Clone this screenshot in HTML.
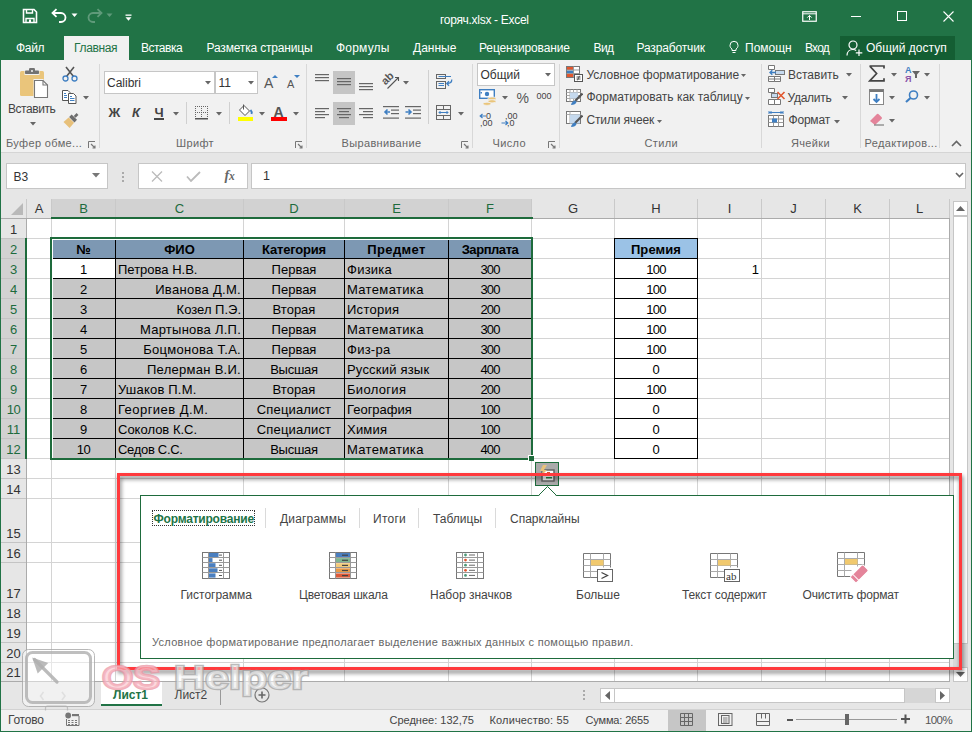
<!DOCTYPE html>
<html><head><meta charset="utf-8"><style>
html,body{margin:0;padding:0;width:972px;height:732px;overflow:hidden;background:#fff}
body{position:relative;font-family:"Liberation Sans", sans-serif}
div,span,svg{position:absolute}
.t{white-space:nowrap;font-family:"Liberation Sans", sans-serif}
.wm{font-family:"Liberation Sans", sans-serif;white-space:nowrap}
</style></head><body>
<div style="left:0px;top:0px;width:972px;height:60px;background:#217346"></div>
<svg style="left:22px;top:8px;" width="16" height="16" viewBox="0 0 16 16"><path d="M1.5 1.5h10.5l2.5 2.5v10.5h-13z" fill="none" stroke="#fff" stroke-width="1.6"/><path d="M4.5 1.5v3.5h6v-3.5" fill="none" stroke="#fff" stroke-width="1.4"/><path d="M4 14.5v-4h8v4" fill="none" stroke="#fff" stroke-width="1.4"/><rect x="7" y="11.5" width="2" height="3" fill="#fff"/></svg>
<svg style="left:50px;top:8px;" width="18" height="16" viewBox="0 0 18 16"><path d="M3 5h8a4.5 4.5 0 0 1 0 9h-2" fill="none" stroke="#fff" stroke-width="1.8"/><path d="M6.5 1.2L2.5 5l4 3.8" fill="none" stroke="#fff" stroke-width="1.8"/></svg>
<svg style="left:71px;top:13px;" width="7" height="5" viewBox="0 0 7 5"><path d="M0.5 0.5h6l-3 3.5z" fill="#fff"/></svg>
<svg style="left:86px;top:8px;opacity:.28" width="18" height="16" viewBox="0 0 18 16"><path d="M15 5h-8a4.5 4.5 0 0 0 0 9h2" fill="none" stroke="#fff" stroke-width="1.8"/><path d="M11.5 1.2l4 3.8-4 3.8" fill="none" stroke="#fff" stroke-width="1.8"/></svg>
<svg style="left:106px;top:13px;opacity:.28" width="7" height="5" viewBox="0 0 7 5"><path d="M0.5 0.5h6l-3 3.5z" fill="#fff"/></svg>
<svg style="left:125px;top:14px;" width="7" height="8" viewBox="0 0 7 8"><rect x="0.5" y="0.5" width="6" height="1.3" fill="#fff"/><path d="M0.5 3.2h6l-3 3.6z" fill="#fff"/></svg>
<span class="t" style="left:440px;top:13.84px;font-size:12px;line-height:12px;color:#fff;font-weight:400;letter-spacing:-0.3px;">горяч.xlsx - Excel</span>
<svg style="left:802px;top:11px;" width="15" height="11" viewBox="0 0 15 11"><rect x="0.75" y="0.75" width="13.5" height="9.5" fill="none" stroke="#fff" stroke-width="1.2"/><path d="M0.75 2.8h13.5" stroke="#fff" stroke-width="1"/><path d="M7.5 9V4.5M5.3 6.6l2.2-2.2 2.2 2.2" fill="none" stroke="#fff" stroke-width="1"/></svg>
<div style="left:851px;top:16px;width:10px;height:1px;background:#fff"></div>
<div style="left:897px;top:11px;width:10px;height:10px;border:1px solid #fff;box-sizing:border-box"></div>
<svg style="left:943px;top:11px;" width="11" height="11" viewBox="0 0 11 11"><path d="M0.5 0.5l10 10M10.5 0.5l-10 10" stroke="#fff" stroke-width="1.1"/></svg>
<div style="left:64px;top:36px;width:65px;height:24px;background:#f1f1f1"></div>
<span class="t" style="left:16px;top:42.34px;font-size:12px;line-height:12px;color:#fff;font-weight:400;letter-spacing:-0.3px;">Файл</span>
<span class="t" style="left:74px;top:42.34px;font-size:12px;line-height:12px;color:#217346;font-weight:400;letter-spacing:-0.35px;">Главная</span>
<span class="t" style="left:141px;top:42.34px;font-size:12px;line-height:12px;color:#fff;font-weight:400;letter-spacing:-0.5px;">Вставка</span>
<span class="t" style="left:206.5px;top:42.34px;font-size:12px;line-height:12px;color:#fff;font-weight:400;letter-spacing:-0.17px;">Разметка страницы</span>
<span class="t" style="left:336px;top:42.34px;font-size:12px;line-height:12px;color:#fff;font-weight:400;letter-spacing:0.2px;">Формулы</span>
<span class="t" style="left:413px;top:42.34px;font-size:12px;line-height:12px;color:#fff;font-weight:400;">Данные</span>
<span class="t" style="left:479px;top:42.34px;font-size:12px;line-height:12px;color:#fff;font-weight:400;letter-spacing:-0.13px;">Рецензирование</span>
<span class="t" style="left:593.5px;top:42.34px;font-size:12px;line-height:12px;color:#fff;font-weight:400;letter-spacing:-0.6px;">Вид</span>
<span class="t" style="left:636.5px;top:42.34px;font-size:12px;line-height:12px;color:#fff;font-weight:400;letter-spacing:-0.15px;">Разработчик</span>
<svg style="left:729px;top:40px;" width="10" height="14" viewBox="0 0 10 14"><path d="M3 10.5V9C1.5 8 1 6.8 1 5.3a4 4 0 0 1 8 0c0 1.5-.5 2.7-2 3.7v1.5z" fill="none" stroke="#fff" stroke-width="1"/><path d="M3.5 12.5h3" stroke="#fff" stroke-width="1"/></svg>
<span class="t" style="left:745px;top:42.34px;font-size:12px;line-height:12px;color:#fff;font-weight:400;width:47px;overflow:hidden;">Помощн</span>
<span class="t" style="left:805px;top:42.34px;font-size:12px;line-height:12px;color:#fff;font-weight:400;letter-spacing:-0.8px;">Вход</span>
<div style="left:840px;top:36px;width:115px;height:24px;background:#145e33"></div>
<svg style="left:846px;top:40px;" width="18" height="17" viewBox="0 0 18 17"><circle cx="7" cy="5" r="4" fill="none" stroke="#fff" stroke-width="1.2"/><path d="M1 15.5c0-3.5 2.5-6 6-6 1.3 0 2.3.3 3.2.9" fill="none" stroke="#fff" stroke-width="1.2"/><path d="M13 9.5v6.5M9.8 12.8h6.5" stroke="#fff" stroke-width="1.2"/></svg>
<span class="t" style="left:866px;top:42.34px;font-size:12px;line-height:12px;color:#fff;font-weight:400;">Общий доступ</span>
<div style="left:1px;top:60px;width:970px;height:92px;background:#f1f1f1"></div>
<div style="left:1px;top:152px;width:970px;height:1px;background:#d5d5d5"></div>
<span class="t" style="left:6px;top:138.49px;font-size:11px;line-height:11px;color:#666;font-weight:400;letter-spacing:0.35px">Буфер обме...</span>
<span class="t" style="left:176px;top:138.49px;font-size:11px;line-height:11px;color:#666;font-weight:400;letter-spacing:0.35px">Шрифт</span>
<span class="t" style="left:341.5px;top:138.49px;font-size:11px;line-height:11px;color:#666;font-weight:400;letter-spacing:0.35px">Выравнивание</span>
<span class="t" style="left:492.5px;top:138.49px;font-size:11px;line-height:11px;color:#666;font-weight:400;letter-spacing:0.35px">Число</span>
<span class="t" style="left:644.5px;top:138.49px;font-size:11px;line-height:11px;color:#666;font-weight:400;letter-spacing:0.35px">Стили</span>
<span class="t" style="left:791px;top:138.49px;font-size:11px;line-height:11px;color:#666;font-weight:400;letter-spacing:0.35px">Ячейки</span>
<span class="t" style="left:864.5px;top:138.49px;font-size:11px;line-height:11px;color:#666;font-weight:400;letter-spacing:0.35px">Редактиров...</span>
<div style="left:99px;top:64px;width:1px;height:84px;background:#d8d8d8"></div>
<div style="left:306px;top:64px;width:1px;height:84px;background:#d8d8d8"></div>
<div style="left:472px;top:64px;width:1px;height:84px;background:#d8d8d8"></div>
<div style="left:559px;top:64px;width:1px;height:84px;background:#d8d8d8"></div>
<div style="left:761px;top:64px;width:1px;height:84px;background:#d8d8d8"></div>
<div style="left:860px;top:64px;width:1px;height:84px;background:#d8d8d8"></div>
<div style="left:939px;top:64px;width:1px;height:84px;background:#d8d8d8"></div>
<svg style="left:88px;top:141px;" width="8" height="8" viewBox="0 0 8 8"><path d="M0.5 7V0.5H7" fill="none" stroke="#777" stroke-width="1"/><path d="M3 3l4 4M7 4.5V7H4.5" fill="none" stroke="#777" stroke-width="1.1"/></svg>
<svg style="left:295px;top:141px;" width="8" height="8" viewBox="0 0 8 8"><path d="M0.5 7V0.5H7" fill="none" stroke="#777" stroke-width="1"/><path d="M3 3l4 4M7 4.5V7H4.5" fill="none" stroke="#777" stroke-width="1.1"/></svg>
<svg style="left:461px;top:141px;" width="8" height="8" viewBox="0 0 8 8"><path d="M0.5 7V0.5H7" fill="none" stroke="#777" stroke-width="1"/><path d="M3 3l4 4M7 4.5V7H4.5" fill="none" stroke="#777" stroke-width="1.1"/></svg>
<svg style="left:548px;top:141px;" width="8" height="8" viewBox="0 0 8 8"><path d="M0.5 7V0.5H7" fill="none" stroke="#777" stroke-width="1"/><path d="M3 3l4 4M7 4.5V7H4.5" fill="none" stroke="#777" stroke-width="1.1"/></svg>
<svg style="left:951px;top:140px;" width="11" height="7" viewBox="0 0 11 7"><path d="M1 6l4.5-4.5L10 6" fill="none" stroke="#666" stroke-width="1.6"/></svg>
<svg style="left:19px;top:67px;" width="34" height="34" viewBox="0 0 34 34"><rect x="1" y="4" width="24" height="25" rx="1.5" fill="#eac57b"/><path d="M5.5 2.5h15v5.5h-15z" fill="#f1f1f1"/><rect x="6" y="3.5" width="14" height="3.5" rx="0.8" fill="#737373"/><rect x="10" y="1" width="6" height="4" rx="1.2" fill="#737373"/><circle cx="13" cy="4" r="0.9" fill="#fff"/><path d="M14.5 12h9.5l5 5v14.5h-14.5z" fill="#f1f1f1"/><path d="M15.5 13.5h8.5l4.5 4.5v12.5h-13z" fill="#fff" stroke="#777" stroke-width="1.1"/><path d="M24 13.5v4.5h4.5" fill="none" stroke="#777" stroke-width="1.1"/></svg>
<span class="t" style="left:8px;top:102.84px;font-size:12px;line-height:12px;color:#444;font-weight:400;letter-spacing:-0.45px">Вставить</span>
<svg style="left:30px;top:122px;" width="6" height="4" viewBox="0 0 6 4"><path d="M0 0h6l-3 3.5z" fill="#666"/></svg>
<svg style="left:62px;top:66px;" width="16" height="16" viewBox="0 0 16 16"><path d="M4 1l7.5 9.5M12 1L4.5 10.5" stroke="#555" stroke-width="1.6"/><circle cx="3.5" cy="12.5" r="2.5" fill="none" stroke="#3f7fc2" stroke-width="1.3"/><circle cx="12.5" cy="12.5" r="2.5" fill="none" stroke="#3f7fc2" stroke-width="1.3"/></svg>
<svg style="left:61px;top:89px;" width="18" height="16" viewBox="0 0 18 16"><path d="M1.5 1.5h5.5l2 2v8h-7.5z" fill="#fff" stroke="#555" stroke-width="1"/><path d="M3 4.5h2M3 6.5h3M3 8.5h3" stroke="#3f7fc2" stroke-width="1"/><path d="M7.5 4.5h5l2.5 2.5v7.5h-7.5z" fill="#fff" stroke="#555" stroke-width="1"/><path d="M9 7.5h2M9 9.5h4.5M9 11.5h4.5" stroke="#3f7fc2" stroke-width="1"/></svg>
<svg style="left:83px;top:96px;" width="7" height="4" viewBox="0 0 7 4"><path d="M0 0h6l-3 3.5z" fill="#666"/></svg>
<svg style="left:61px;top:112px;" width="18" height="17" viewBox="0 0 18 17"><g transform="translate(10.5 8) rotate(45)"><rect x="-1.3" y="-8.5" width="2.6" height="4" fill="#6d6d6d"/><rect x="-3.8" y="-4" width="7.6" height="3.6" fill="#6d6d6d"/><path d="M-3.8 0.2H3.8L4.3 7H-4.3z" fill="#e7c07a"/></g></svg>
<div style="left:104px;top:71px;width:111px;height:23px;background:#fff;border:1px solid #c6c6c6;box-sizing:border-box"></div>
<span class="t" style="left:107px;top:76.84px;font-size:12px;line-height:12px;color:#333;font-weight:400;">Calibri</span>
<svg style="left:205px;top:81px;" width="6" height="4" viewBox="0 0 6 4"><path d="M0 0h6l-3 3.5z" fill="#666"/></svg>
<div style="left:215px;top:71px;width:43px;height:23px;background:#fff;border:1px solid #c6c6c6;box-sizing:border-box"></div>
<span class="t" style="left:218.5px;top:76.84px;font-size:12px;line-height:12px;color:#333;font-weight:400;">11</span>
<svg style="left:248px;top:81px;" width="6" height="4" viewBox="0 0 6 4"><path d="M0 0h6l-3 3.5z" fill="#666"/></svg>
<span class="t" style="left:264px;top:76.15px;font-size:14px;line-height:14px;color:#555;font-weight:400;">A</span>
<svg style="left:272px;top:75px;" width="6" height="3" viewBox="0 0 6 3"><path d="M0 3h6L3 0z" fill="#3f7fc2"/></svg>
<span class="t" style="left:287px;top:78.69px;font-size:11px;line-height:11px;color:#555;font-weight:400;">A</span>
<svg style="left:294px;top:75px;" width="6" height="3" viewBox="0 0 6 3"><path d="M0 0h6L3 3z" fill="#3f7fc2"/></svg>
<span class="t" style="left:108.5px;top:106.20px;font-size:13px;line-height:13px;color:#444;font-weight:700;">Ж</span>
<span class="t" style="left:132px;top:106.20px;font-size:13px;line-height:13px;color:#444;font-weight:700;font-style:italic">К</span>
<span class="t" style="left:154.5px;top:106.20px;font-size:13px;line-height:13px;color:#444;font-weight:700;">Ч</span>
<div style="left:154px;top:118px;width:10px;height:1.5px;background:#444"></div>
<svg style="left:173px;top:112px;" width="6" height="4" viewBox="0 0 6 4"><path d="M0 0h6l-3 3.5z" fill="#666"/></svg>
<div style="left:186px;top:102px;width:1px;height:22px;background:#d0d0d0"></div>
<svg style="left:195px;top:106px;" width="13" height="14" viewBox="0 0 13 14"><rect x="0" y="0" width="1" height="1" fill="#666"/><rect x="0" y="0" width="1" height="1" fill="#666"/><rect x="6" y="0" width="1" height="1" fill="#666"/><rect x="12" y="0" width="1" height="1" fill="#666"/><rect x="0" y="6" width="1" height="1" fill="#666"/><rect x="2" y="0" width="1" height="1" fill="#666"/><rect x="0" y="2" width="1" height="1" fill="#666"/><rect x="6" y="2" width="1" height="1" fill="#666"/><rect x="12" y="2" width="1" height="1" fill="#666"/><rect x="2" y="6" width="1" height="1" fill="#666"/><rect x="4" y="0" width="1" height="1" fill="#666"/><rect x="0" y="4" width="1" height="1" fill="#666"/><rect x="6" y="4" width="1" height="1" fill="#666"/><rect x="12" y="4" width="1" height="1" fill="#666"/><rect x="4" y="6" width="1" height="1" fill="#666"/><rect x="6" y="0" width="1" height="1" fill="#666"/><rect x="0" y="6" width="1" height="1" fill="#666"/><rect x="6" y="6" width="1" height="1" fill="#666"/><rect x="12" y="6" width="1" height="1" fill="#666"/><rect x="6" y="6" width="1" height="1" fill="#666"/><rect x="8" y="0" width="1" height="1" fill="#666"/><rect x="0" y="8" width="1" height="1" fill="#666"/><rect x="6" y="8" width="1" height="1" fill="#666"/><rect x="12" y="8" width="1" height="1" fill="#666"/><rect x="8" y="6" width="1" height="1" fill="#666"/><rect x="10" y="0" width="1" height="1" fill="#666"/><rect x="0" y="10" width="1" height="1" fill="#666"/><rect x="6" y="10" width="1" height="1" fill="#666"/><rect x="12" y="10" width="1" height="1" fill="#666"/><rect x="10" y="6" width="1" height="1" fill="#666"/><rect x="12" y="0" width="1" height="1" fill="#666"/><rect x="0" y="12" width="1" height="1" fill="#666"/><rect x="6" y="12" width="1" height="1" fill="#666"/><rect x="12" y="12" width="1" height="1" fill="#666"/><rect x="12" y="6" width="1" height="1" fill="#666"/><rect x="0" y="12" width="13" height="1.5" fill="#555"/></svg>
<svg style="left:216px;top:112px;" width="6" height="4" viewBox="0 0 6 4"><path d="M0 0h6l-3 3.5z" fill="#666"/></svg>
<div style="left:229px;top:102px;width:1px;height:22px;background:#d0d0d0"></div>
<svg style="left:238px;top:104px;" width="16" height="13" viewBox="0 0 16 13"><path d="M6 1.5l5.5 5.5-4.5 4.5-5.5-5.5z" fill="#fff" stroke="#555" stroke-width="1"/><path d="M5.5 0.5v5" stroke="#555" stroke-width="1"/><path d="M12.5 6c1 1 1.5 2.5 1 4" fill="none" stroke="#3f7fc2" stroke-width="1.8"/></svg>
<div style="left:238px;top:117px;width:15px;height:4px;background:#ffff00"></div>
<svg style="left:259px;top:112px;" width="6" height="4" viewBox="0 0 6 4"><path d="M0 0h6l-3 3.5z" fill="#666"/></svg>
<span class="t" style="left:273.5px;top:104.95px;font-size:14px;line-height:14px;color:#555;font-weight:700;">A</span>
<div style="left:271px;top:117px;width:16px;height:4px;background:#ff0000"></div>
<svg style="left:293px;top:112px;" width="6" height="4" viewBox="0 0 6 4"><path d="M0 0h6l-3 3.5z" fill="#666"/></svg>
<div style="left:333px;top:71px;width:22px;height:23px;background:#c5c5c5"></div>
<div style="left:333px;top:102px;width:22px;height:23px;background:#c5c5c5"></div>
<svg style="left:315px;top:74px;" width="14" height="8" viewBox="0 0 14 8"><rect x="0" y="0" width="14" height="1.2" fill="#666"/><rect x="0" y="3" width="14" height="1.2" fill="#666"/><rect x="0" y="6" width="14" height="1.2" fill="#666"/></svg>
<svg style="left:337px;top:78px;" width="14" height="8" viewBox="0 0 14 8"><rect x="0" y="0" width="14" height="1.2" fill="#666"/><rect x="0" y="3" width="14" height="1.2" fill="#666"/><rect x="0" y="6" width="14" height="1.2" fill="#666"/></svg>
<svg style="left:359px;top:83px;" width="14" height="8" viewBox="0 0 14 8"><rect x="0" y="0" width="14" height="1.2" fill="#666"/><rect x="0" y="3" width="14" height="1.2" fill="#666"/><rect x="0" y="6" width="14" height="1.2" fill="#666"/></svg>
<svg style="left:382px;top:73px;" width="18" height="17" viewBox="0 0 18 17"><text x="0" y="0" transform="translate(3.5 12.5) rotate(-45)" font-family="Liberation Sans" font-size="11" font-weight="700" fill="#555">ab</text><path d="M5.5 15.5L16 5M13 4.5h3.5V8" fill="none" stroke="#555" stroke-width="1.1"/></svg>
<svg style="left:403px;top:81px;" width="6" height="4" viewBox="0 0 6 4"><path d="M0 0h6l-3 3.5z" fill="#666"/></svg>
<svg style="left:315px;top:108px;" width="14" height="11" viewBox="0 0 14 11"><rect x="0" y="0" width="14" height="1.2" fill="#666"/><rect x="0" y="3" width="10" height="1.2" fill="#666"/><rect x="0" y="6" width="14" height="1.2" fill="#666"/><rect x="0" y="9" width="10" height="1.2" fill="#666"/></svg>
<svg style="left:337px;top:108px;" width="14" height="11" viewBox="0 0 14 11"><rect x="0" y="0" width="14" height="1.2" fill="#666"/><rect x="2" y="3" width="10" height="1.2" fill="#666"/><rect x="0" y="6" width="14" height="1.2" fill="#666"/><rect x="2" y="9" width="10" height="1.2" fill="#666"/></svg>
<svg style="left:359px;top:108px;" width="14" height="11" viewBox="0 0 14 11"><rect x="0" y="0" width="14" height="1.2" fill="#666"/><rect x="4" y="3" width="10" height="1.2" fill="#666"/><rect x="0" y="6" width="14" height="1.2" fill="#666"/><rect x="4" y="9" width="10" height="1.2" fill="#666"/></svg>
<svg style="left:383px;top:106px;" width="17" height="13" viewBox="0 0 17 13"><rect x="0" y="0" width="16" height="1.2" fill="#666"/><rect x="8" y="3.5" width="8" height="1.2" fill="#666"/><rect x="8" y="7" width="8" height="1.2" fill="#666"/><rect x="0" y="11.5" width="16" height="1.2" fill="#666"/><path d="M7 6h-5M4.5 3.5L2 6l2.5 2.5" fill="none" stroke="#3f7fc2" stroke-width="1.6"/></svg>
<svg style="left:405px;top:106px;" width="17" height="13" viewBox="0 0 17 13"><rect x="0" y="0" width="16" height="1.2" fill="#666"/><rect x="8" y="3.5" width="8" height="1.2" fill="#666"/><rect x="8" y="7" width="8" height="1.2" fill="#666"/><rect x="0" y="11.5" width="16" height="1.2" fill="#666"/><path d="M0.5 6h5.5M3.5 3.5L6 6 3.5 8.5" fill="none" stroke="#3f7fc2" stroke-width="1.6"/></svg>
<div style="left:428px;top:70px;width:1px;height:54px;background:#d0d0d0"></div>
<svg style="left:436px;top:74px;" width="17" height="15" viewBox="0 0 17 15"><rect x="0.5" y="0.5" width="9" height="4" fill="none" stroke="#666" stroke-width="1"/><rect x="0.5" y="7.5" width="9" height="7" fill="none" stroke="#666" stroke-width="1"/><path d="M2.5 2.5h12.5" stroke="#3f7fc2" stroke-width="1"/><path d="M2.5 9.5h5.5M2.5 11.5h5.5" stroke="#3f7fc2" stroke-width="1"/><path d="M15.8 5.5c0 2.5-1.5 4-4.8 4M13 7.3l-2.2 2.2 2.2 2.2" fill="none" stroke="#3f7fc2" stroke-width="1.3"/></svg>
<svg style="left:436px;top:105px;" width="16" height="16" viewBox="0 0 16 16"><rect x="0.5" y="0.5" width="14" height="14" fill="none" stroke="#666" stroke-width="1"/><path d="M0.5 4.5h14M0.5 10.5h14M7.5 0.5v4M7.5 10.5v4" stroke="#666" stroke-width="1"/><path d="M3 7.5h9M4.5 6l-1.5 1.5 1.5 1.5M10.5 6l1.5 1.5-1.5 1.5" fill="none" stroke="#3f7fc2" stroke-width="1"/></svg>
<svg style="left:458px;top:112px;" width="6" height="4" viewBox="0 0 6 4"><path d="M0 0h6l-3 3.5z" fill="#666"/></svg>
<div style="left:477px;top:63px;width:78px;height:23px;background:#fff;border:1px solid #c6c6c6;box-sizing:border-box"></div>
<span class="t" style="left:480.5px;top:69.34px;font-size:12px;line-height:12px;color:#333;font-weight:400;">Общий</span>
<svg style="left:545px;top:73px;" width="6" height="4" viewBox="0 0 6 4"><path d="M0 0h6l-3 3.5z" fill="#666"/></svg>
<svg style="left:479px;top:89px;" width="18" height="17" viewBox="0 0 18 17"><rect x="0.7" y="0.7" width="14.6" height="8.6" fill="#fff" stroke="#3f7fc2" stroke-width="1.4"/><circle cx="8" cy="5" r="2.2" fill="#3f7fc2"/><rect x="1.5" y="3" width="1.5" height="1.5" fill="#3f7fc2"/><ellipse cx="13" cy="9.5" rx="4" ry="1.6" fill="#eac57b" stroke="#f1f1f1" stroke-width="0.8"/><ellipse cx="13" cy="12.3" rx="4" ry="1.6" fill="#eac57b" stroke="#f1f1f1" stroke-width="0.8"/><ellipse cx="8" cy="14.8" rx="4" ry="1.6" fill="#eac57b" stroke="#f1f1f1" stroke-width="0.8"/></svg>
<svg style="left:502px;top:96px;" width="6" height="4" viewBox="0 0 6 4"><path d="M0 0h6l-3 3.5z" fill="#666"/></svg>
<span class="t" style="left:516.5px;top:91.15px;font-size:14px;line-height:14px;color:#555;font-weight:400;">%</span>
<span class="t" style="left:536.5px;top:92.18px;font-size:9px;line-height:9px;color:#444;font-weight:400;">000</span>
<span class="t" style="left:486px;top:112.38px;font-size:9px;line-height:9px;color:#444;font-weight:400;">0</span>
<span class="t" style="left:480px;top:119.38px;font-size:9px;line-height:9px;color:#444;font-weight:400;">,00</span>
<svg style="left:479px;top:113px;" width="8" height="6" viewBox="0 0 8 6"><path d="M7 3H1.5M3.5 1L1.2 3l2.3 2" fill="none" stroke="#3f7fc2" stroke-width="1.2"/></svg>
<span class="t" style="left:505px;top:112.38px;font-size:9px;line-height:9px;color:#444;font-weight:400;">,00</span>
<span class="t" style="left:507px;top:119.38px;font-size:9px;line-height:9px;color:#444;font-weight:400;">,0</span>
<svg style="left:501px;top:120px;" width="8" height="6" viewBox="0 0 8 6"><path d="M0.5 3H6.5M4.5 1l2.3 2-2.3 2" fill="none" stroke="#3f7fc2" stroke-width="1.2"/></svg>
<svg style="left:566px;top:66px;" width="17" height="16" viewBox="0 0 17 16"><rect x="0.5" y="0.5" width="13" height="11" fill="#fff" stroke="#777" stroke-width="1"/><rect x="1" y="1" width="6" height="3" fill="#e2572f"/><rect x="1" y="4.5" width="6" height="3" fill="#3f7fc2"/><rect x="1" y="8" width="6" height="3" fill="#e2572f"/><path d="M7.5 0.5v11M0.5 4h13M0.5 7.5h13" stroke="#999" stroke-width="1"/><rect x="8.5" y="8.5" width="8" height="7" fill="#fff" stroke="#555" stroke-width="1"/><path d="M10.5 11h4M10.5 13h4M13.5 9.8l-2 4.5" stroke="#444" stroke-width="0.9"/></svg>
<span class="t" style="left:586.5px;top:69.34px;font-size:12px;line-height:12px;color:#444;font-weight:400;">Условное форматирование</span>
<svg style="left:741px;top:74px;" width="5" height="3" viewBox="0 0 5 3"><path d="M0 0h5L2.5 3z" fill="#666"/></svg>
<svg style="left:566px;top:89px;" width="17" height="16" viewBox="0 0 17 16"><rect x="0.5" y="0.5" width="14" height="12" fill="#fff" stroke="#777" stroke-width="1"/><path d="M0.5 3.5h14M0.5 6.5h14M0.5 9.5h14M4 0.5v12M7.5 0.5v12M11 0.5v12" stroke="#aaa" stroke-width="1"/><rect x="4" y="3.5" width="8" height="6" fill="#c5d9ee"/><path d="M16.5 4.5L9 12" stroke="#555" stroke-width="2.2"/><path d="M9.5 11.5c-2 0-4 1.5-4.5 4.5 3 0 5-1 5.5-3z" fill="#3f7fc2"/></svg>
<span class="t" style="left:586.5px;top:91.34px;font-size:12px;line-height:12px;color:#444;font-weight:400;">Форматировать как таблицу</span>
<svg style="left:745px;top:97px;" width="5" height="3" viewBox="0 0 5 3"><path d="M0 0h5L2.5 3z" fill="#666"/></svg>
<svg style="left:566px;top:111px;" width="17" height="17" viewBox="0 0 17 17"><rect x="0.5" y="0.5" width="14" height="12" fill="#fff" stroke="#777" stroke-width="1"/><path d="M0.5 3.5h14M4 0.5v12" stroke="#aaa" stroke-width="1"/><rect x="4" y="3.5" width="10" height="9" fill="#c5d9ee"/><path d="M16.5 4.5L9 12" stroke="#555" stroke-width="2.2"/><path d="M9.5 11.5c-2 0-4 1.5-4.5 4.5 3 0 5-1 5.5-3z" fill="#3f7fc2"/></svg>
<span class="t" style="left:586.5px;top:114.34px;font-size:12px;line-height:12px;color:#444;font-weight:400;letter-spacing:-0.15px;">Стили ячеек</span>
<svg style="left:657px;top:120px;" width="5" height="3" viewBox="0 0 5 3"><path d="M0 0h5L2.5 3z" fill="#666"/></svg>
<svg style="left:768px;top:65px;" width="18" height="17" viewBox="0 0 18 17"><path d="M0.5 0.5h6v4h-6zM0.5 11.5h6v5h-6zM6.5 11.5h6v5h-6z" fill="#fff" stroke="#777" stroke-width="1"/><path d="M0.5 14h12" stroke="#777" stroke-width="1"/><rect x="7.5" y="5.5" width="9" height="4" fill="#c5d9ee" stroke="#777" stroke-width="1"/><path d="M12 7.5" /><path d="M8 7.5H2M4.3 5.2L2 7.5l2.3 2.3" fill="none" stroke="#3f7fc2" stroke-width="1.4"/></svg>
<span class="t" style="left:788px;top:68.84px;font-size:12px;line-height:12px;color:#444;font-weight:400;">Вставить</span>
<svg style="left:846px;top:73px;" width="6" height="4" viewBox="0 0 6 4"><path d="M0 0h6l-3 3.5z" fill="#666"/></svg>
<svg style="left:768px;top:88px;" width="18" height="17" viewBox="0 0 18 17"><path d="M0.5 0.5h6v4h-6zM0.5 11.5h6v5h-6zM6.5 11.5h6v5h-6z" fill="#fff" stroke="#777" stroke-width="1"/><rect x="3.5" y="5.5" width="6" height="4" fill="#c5d9ee" stroke="#777" stroke-width="1"/><path d="M9.5 4l7 7M16.5 4l-7 7" stroke="#e2572f" stroke-width="1.6"/></svg>
<span class="t" style="left:787.5px;top:91.64px;font-size:12px;line-height:12px;color:#444;font-weight:400;letter-spacing:-0.25px;">Удалить</span>
<svg style="left:842px;top:96px;" width="6" height="4" viewBox="0 0 6 4"><path d="M0 0h6l-3 3.5z" fill="#666"/></svg>
<svg style="left:768px;top:111px;" width="17" height="17" viewBox="0 0 17 17"><path d="M1 1.5h14M1 0v3M15 0v3M3 1.5l-1.5 0M3.5 0.5L1.5 1.5 3.5 2.5M12.5 0.5l2 1-2 1" fill="none" stroke="#3f7fc2" stroke-width="1"/><rect x="0.5" y="4.5" width="15" height="11" fill="#fff" stroke="#777" stroke-width="1"/><path d="M0.5 8h15M0.5 11.5h15M5.5 4.5v11M10.5 4.5v11" stroke="#999" stroke-width="1"/><rect x="4" y="7.5" width="5" height="4" fill="#3f7fc2"/></svg>
<span class="t" style="left:788.5px;top:114.34px;font-size:12px;line-height:12px;color:#444;font-weight:400;letter-spacing:-0.2px;">Формат</span>
<svg style="left:834px;top:120px;" width="6" height="4" viewBox="0 0 6 4"><path d="M0 0h6l-3 3.5z" fill="#666"/></svg>
<svg style="left:868px;top:65px;" width="17" height="17" viewBox="0 0 17 17"><path d="M1.5 1h14.5v2.5M1.8 1.2l6.8 7.3-6.8 7.3h14.2v-2.5" fill="none" stroke="#444" stroke-width="1.7"/></svg>
<svg style="left:891px;top:73px;" width="6" height="4" viewBox="0 0 6 4"><path d="M0 0h6l-3 3.5z" fill="#666"/></svg>
<span class="t" style="left:905px;top:65.98px;font-size:9px;line-height:9px;color:#3f7fc2;font-weight:700;">А</span>
<span class="t" style="left:905px;top:74.78px;font-size:9px;line-height:9px;color:#8a53a8;font-weight:700;">Я</span>
<svg style="left:912px;top:71px;" width="8" height="7" viewBox="0 0 8 7"><path d="M0 0h8L5 3.5V7H3V3.5z" fill="#666"/></svg>
<svg style="left:924px;top:73px;" width="6" height="4" viewBox="0 0 6 4"><path d="M0 0h6l-3 3.5z" fill="#666"/></svg>
<svg style="left:869px;top:89px;" width="15" height="16" viewBox="0 0 15 16"><rect x="0.5" y="0.5" width="14" height="15" fill="#fff" stroke="#888" stroke-width="1"/><rect x="0.5" y="0.5" width="14" height="2.5" fill="#777"/><path d="M7.5 5v8M4.5 10l3 3 3-3" fill="none" stroke="#3f7fc2" stroke-width="1.8"/></svg>
<svg style="left:889px;top:96px;" width="6" height="4" viewBox="0 0 6 4"><path d="M0 0h6l-3 3.5z" fill="#666"/></svg>
<svg style="left:905px;top:90px;" width="14" height="13" viewBox="0 0 14 13"><circle cx="8.5" cy="5" r="4" fill="none" stroke="#3f7fc2" stroke-width="1.6"/><path d="M5.5 8L1 12" stroke="#3f7fc2" stroke-width="2.2"/></svg>
<svg style="left:924px;top:96px;" width="6" height="4" viewBox="0 0 6 4"><path d="M0 0h6l-3 3.5z" fill="#666"/></svg>
<svg style="left:869px;top:112px;" width="16" height="14" viewBox="0 0 16 14"><path d="M1 9l7-7a1 1 0 0 1 1.4 0l3.3 3.3a1 1 0 0 1 0 1.4L6 13z" fill="#e4849a"/><path d="M5 13h10" stroke="#666" stroke-width="1"/></svg>
<svg style="left:889px;top:119px;" width="6" height="4" viewBox="0 0 6 4"><path d="M0 0h6l-3 3.5z" fill="#666"/></svg>
<div style="left:1px;top:153px;width:970px;height:46px;background:#e6e6e6"></div>
<div style="left:6px;top:163px;width:102px;height:26px;background:#fff;border:1px solid #c6c6c6;box-sizing:border-box"></div>
<span class="t" style="left:13.5px;top:170.84px;font-size:12px;line-height:12px;color:#333;font-weight:400;">B3</span>
<svg style="left:92px;top:173px;" width="8" height="5" viewBox="0 0 8 5"><path d="M0 0h8l-4 4.5z" fill="#777"/></svg>
<div style="left:122px;top:172px;width:2px;height:2px;background:#aaa"></div>
<div style="left:122px;top:176px;width:2px;height:2px;background:#aaa"></div>
<div style="left:122px;top:180px;width:2px;height:2px;background:#aaa"></div>
<div style="left:138px;top:163px;width:110px;height:26px;background:#fff;border:1px solid #c6c6c6;box-sizing:border-box"></div>
<svg style="left:151px;top:171px;" width="12" height="11" viewBox="0 0 12 11"><path d="M1 0.5l10 10M11 0.5l-10 10" stroke="#bbb" stroke-width="1.3"/></svg>
<svg style="left:186px;top:171px;" width="15" height="11" viewBox="0 0 15 11"><path d="M1 5.5l4 4.5L14 1" fill="none" stroke="#bbb" stroke-width="1.8"/></svg>
<span class="t" style="left:224.5px;top:169.15px;font-size:14px;line-height:14px;color:#666;font-weight:700;font-family:Liberation Serif;font-style:italic;letter-spacing:-0.2px">f<span style="font-size:11.5px">x</span></span>
<div style="left:251px;top:163px;width:715px;height:26px;background:#fff;border:1px solid #c6c6c6;box-sizing:border-box"></div>
<span class="t" style="left:263px;top:170.42px;font-size:12.5px;line-height:12.5px;color:#333;font-weight:400;">1</span>
<svg style="left:955px;top:172px;" width="9" height="6" viewBox="0 0 9 6"><path d="M1 1l3.5 3.5L8 1" fill="none" stroke="#666" stroke-width="1.6"/></svg>
<div style="left:1px;top:199px;width:948px;height:483px;background:#fff"></div>
<div style="left:1px;top:199px;width:949px;height:19px;background:#e6e6e6"></div>
<div style="left:1px;top:199px;width:25px;height:483px;background:#e6e6e6"></div>
<div style="left:52px;top:199px;width:480px;height:19px;background:#d2d2d2"></div>
<div style="left:1px;top:239px;width:25px;height:220px;background:#d2d2d2"></div>
<svg style="left:11px;top:203px;" width="12" height="12" viewBox="0 0 12 12"><path d="M12 0V12H0z" fill="#b9b9b9"/></svg>
<div style="left:26px;top:218px;width:1px;height:463px;background:#ababab"></div>
<div style="left:51px;top:218px;width:1px;height:463px;background:#d4d4d4"></div>
<div style="left:115px;top:218px;width:1px;height:463px;background:#d4d4d4"></div>
<div style="left:243px;top:218px;width:1px;height:463px;background:#d4d4d4"></div>
<div style="left:344px;top:218px;width:1px;height:463px;background:#d4d4d4"></div>
<div style="left:448px;top:218px;width:1px;height:463px;background:#d4d4d4"></div>
<div style="left:531px;top:218px;width:1px;height:463px;background:#d4d4d4"></div>
<div style="left:614px;top:218px;width:1px;height:463px;background:#d4d4d4"></div>
<div style="left:697px;top:218px;width:1px;height:463px;background:#d4d4d4"></div>
<div style="left:761px;top:218px;width:1px;height:463px;background:#d4d4d4"></div>
<div style="left:825px;top:218px;width:1px;height:463px;background:#d4d4d4"></div>
<div style="left:889px;top:218px;width:1px;height:463px;background:#d4d4d4"></div>
<div style="left:949px;top:218px;width:1px;height:463px;background:#d4d4d4"></div>
<div style="left:26px;top:199px;width:1px;height:19px;background:#c9c9c9"></div>
<div style="left:51px;top:199px;width:1px;height:19px;background:#c9c9c9"></div>
<div style="left:115px;top:199px;width:1px;height:19px;background:#c9c9c9"></div>
<div style="left:243px;top:199px;width:1px;height:19px;background:#c9c9c9"></div>
<div style="left:344px;top:199px;width:1px;height:19px;background:#c9c9c9"></div>
<div style="left:448px;top:199px;width:1px;height:19px;background:#c9c9c9"></div>
<div style="left:531px;top:199px;width:1px;height:19px;background:#c9c9c9"></div>
<div style="left:614px;top:199px;width:1px;height:19px;background:#c9c9c9"></div>
<div style="left:697px;top:199px;width:1px;height:19px;background:#c9c9c9"></div>
<div style="left:761px;top:199px;width:1px;height:19px;background:#c9c9c9"></div>
<div style="left:825px;top:199px;width:1px;height:19px;background:#c9c9c9"></div>
<div style="left:889px;top:199px;width:1px;height:19px;background:#c9c9c9"></div>
<div style="left:949px;top:199px;width:1px;height:19px;background:#c9c9c9"></div>
<div style="left:27px;top:218px;width:922px;height:1px;background:#d4d4d4"></div>
<div style="left:1px;top:218px;width:25px;height:1px;background:#c4c4c4"></div>
<div style="left:27px;top:238px;width:922px;height:1px;background:#d4d4d4"></div>
<div style="left:1px;top:238px;width:25px;height:1px;background:#c4c4c4"></div>
<div style="left:27px;top:258px;width:922px;height:1px;background:#d4d4d4"></div>
<div style="left:1px;top:258px;width:25px;height:1px;background:#c4c4c4"></div>
<div style="left:27px;top:278px;width:922px;height:1px;background:#d4d4d4"></div>
<div style="left:1px;top:278px;width:25px;height:1px;background:#c4c4c4"></div>
<div style="left:27px;top:298px;width:922px;height:1px;background:#d4d4d4"></div>
<div style="left:1px;top:298px;width:25px;height:1px;background:#c4c4c4"></div>
<div style="left:27px;top:318px;width:922px;height:1px;background:#d4d4d4"></div>
<div style="left:1px;top:318px;width:25px;height:1px;background:#c4c4c4"></div>
<div style="left:27px;top:338px;width:922px;height:1px;background:#d4d4d4"></div>
<div style="left:1px;top:338px;width:25px;height:1px;background:#c4c4c4"></div>
<div style="left:27px;top:358px;width:922px;height:1px;background:#d4d4d4"></div>
<div style="left:1px;top:358px;width:25px;height:1px;background:#c4c4c4"></div>
<div style="left:27px;top:378px;width:922px;height:1px;background:#d4d4d4"></div>
<div style="left:1px;top:378px;width:25px;height:1px;background:#c4c4c4"></div>
<div style="left:27px;top:398px;width:922px;height:1px;background:#d4d4d4"></div>
<div style="left:1px;top:398px;width:25px;height:1px;background:#c4c4c4"></div>
<div style="left:27px;top:418px;width:922px;height:1px;background:#d4d4d4"></div>
<div style="left:1px;top:418px;width:25px;height:1px;background:#c4c4c4"></div>
<div style="left:27px;top:438px;width:922px;height:1px;background:#d4d4d4"></div>
<div style="left:1px;top:438px;width:25px;height:1px;background:#c4c4c4"></div>
<div style="left:27px;top:458px;width:922px;height:1px;background:#d4d4d4"></div>
<div style="left:1px;top:458px;width:25px;height:1px;background:#c4c4c4"></div>
<div style="left:27px;top:478px;width:922px;height:1px;background:#d4d4d4"></div>
<div style="left:1px;top:478px;width:25px;height:1px;background:#c4c4c4"></div>
<div style="left:27px;top:498px;width:922px;height:1px;background:#d4d4d4"></div>
<div style="left:1px;top:498px;width:25px;height:1px;background:#c4c4c4"></div>
<div style="left:27px;top:542px;width:922px;height:1px;background:#d4d4d4"></div>
<div style="left:1px;top:542px;width:25px;height:1px;background:#c4c4c4"></div>
<div style="left:27px;top:562px;width:922px;height:1px;background:#d4d4d4"></div>
<div style="left:1px;top:562px;width:25px;height:1px;background:#c4c4c4"></div>
<div style="left:27px;top:602px;width:922px;height:1px;background:#d4d4d4"></div>
<div style="left:1px;top:602px;width:25px;height:1px;background:#c4c4c4"></div>
<div style="left:27px;top:622px;width:922px;height:1px;background:#d4d4d4"></div>
<div style="left:1px;top:622px;width:25px;height:1px;background:#c4c4c4"></div>
<div style="left:27px;top:642px;width:922px;height:1px;background:#d4d4d4"></div>
<div style="left:1px;top:642px;width:25px;height:1px;background:#c4c4c4"></div>
<div style="left:27px;top:662px;width:922px;height:1px;background:#d4d4d4"></div>
<div style="left:1px;top:662px;width:25px;height:1px;background:#c4c4c4"></div>
<div style="left:27px;top:681px;width:922px;height:1px;background:#d4d4d4"></div>
<div style="left:1px;top:681px;width:25px;height:1px;background:#c4c4c4"></div>
<div style="left:1px;top:218px;width:949px;height:1px;background:#ababab"></div>
<div style="left:949px;top:218px;width:1px;height:464px;background:#ababab"></div>
<div style="left:1px;top:681px;width:949px;height:1px;background:#ababab"></div>
<div style="left:51px;top:217px;width:482px;height:2px;background:#1e6b3c"></div>
<div style="left:25px;top:238px;width:2px;height:221px;background:#1e6b3c"></div>
<span class="t" style="left:27px;top:202.00px;font-size:13px;line-height:13px;color:#333;font-weight:400;width:24px;text-align:center;">A</span>
<span class="t" style="left:52px;top:202.00px;font-size:13px;line-height:13px;color:#1d6b3d;font-weight:400;width:63px;text-align:center;">B</span>
<span class="t" style="left:116px;top:202.00px;font-size:13px;line-height:13px;color:#1d6b3d;font-weight:400;width:127px;text-align:center;">C</span>
<span class="t" style="left:244px;top:202.00px;font-size:13px;line-height:13px;color:#1d6b3d;font-weight:400;width:100px;text-align:center;">D</span>
<span class="t" style="left:345px;top:202.00px;font-size:13px;line-height:13px;color:#1d6b3d;font-weight:400;width:103px;text-align:center;">E</span>
<span class="t" style="left:449px;top:202.00px;font-size:13px;line-height:13px;color:#1d6b3d;font-weight:400;width:82px;text-align:center;">F</span>
<span class="t" style="left:532px;top:202.00px;font-size:13px;line-height:13px;color:#333;font-weight:400;width:82px;text-align:center;">G</span>
<span class="t" style="left:615px;top:202.00px;font-size:13px;line-height:13px;color:#333;font-weight:400;width:82px;text-align:center;">H</span>
<span class="t" style="left:698px;top:202.00px;font-size:13px;line-height:13px;color:#333;font-weight:400;width:63px;text-align:center;">I</span>
<span class="t" style="left:762px;top:202.00px;font-size:13px;line-height:13px;color:#333;font-weight:400;width:63px;text-align:center;">J</span>
<span class="t" style="left:826px;top:202.00px;font-size:13px;line-height:13px;color:#333;font-weight:400;width:63px;text-align:center;">K</span>
<span class="t" style="left:890px;top:202.00px;font-size:13px;line-height:13px;color:#333;font-weight:400;width:59px;text-align:center;">L</span>
<span class="t" style="left:1px;top:222.70px;font-size:13px;line-height:13px;color:#333;font-weight:400;width:25px;text-align:center;">1</span>
<span class="t" style="left:1px;top:242.70px;font-size:13px;line-height:13px;color:#1d6b3d;font-weight:400;width:25px;text-align:center;">2</span>
<span class="t" style="left:1px;top:262.70px;font-size:13px;line-height:13px;color:#1d6b3d;font-weight:400;width:25px;text-align:center;">3</span>
<span class="t" style="left:1px;top:282.70px;font-size:13px;line-height:13px;color:#1d6b3d;font-weight:400;width:25px;text-align:center;">4</span>
<span class="t" style="left:1px;top:302.70px;font-size:13px;line-height:13px;color:#1d6b3d;font-weight:400;width:25px;text-align:center;">5</span>
<span class="t" style="left:1px;top:322.70px;font-size:13px;line-height:13px;color:#1d6b3d;font-weight:400;width:25px;text-align:center;">6</span>
<span class="t" style="left:1px;top:342.70px;font-size:13px;line-height:13px;color:#1d6b3d;font-weight:400;width:25px;text-align:center;">7</span>
<span class="t" style="left:1px;top:362.70px;font-size:13px;line-height:13px;color:#1d6b3d;font-weight:400;width:25px;text-align:center;">8</span>
<span class="t" style="left:1px;top:382.70px;font-size:13px;line-height:13px;color:#1d6b3d;font-weight:400;width:25px;text-align:center;">9</span>
<span class="t" style="left:1px;top:402.70px;font-size:13px;line-height:13px;color:#1d6b3d;font-weight:400;width:25px;text-align:center;letter-spacing:-0.6px;">10</span>
<span class="t" style="left:1px;top:422.70px;font-size:13px;line-height:13px;color:#1d6b3d;font-weight:400;width:25px;text-align:center;">11</span>
<span class="t" style="left:1px;top:442.70px;font-size:13px;line-height:13px;color:#1d6b3d;font-weight:400;width:25px;text-align:center;">12</span>
<span class="t" style="left:1px;top:462.70px;font-size:13px;line-height:13px;color:#333;font-weight:400;width:25px;text-align:center;">13</span>
<span class="t" style="left:1px;top:482.70px;font-size:13px;line-height:13px;color:#333;font-weight:400;width:25px;text-align:center;">14</span>
<span class="t" style="left:1px;top:526.70px;font-size:13px;line-height:13px;color:#333;font-weight:400;width:25px;text-align:center;">15</span>
<span class="t" style="left:1px;top:546.70px;font-size:13px;line-height:13px;color:#333;font-weight:400;width:25px;text-align:center;">16</span>
<span class="t" style="left:1px;top:586.70px;font-size:13px;line-height:13px;color:#333;font-weight:400;width:25px;text-align:center;">17</span>
<span class="t" style="left:1px;top:606.70px;font-size:13px;line-height:13px;color:#333;font-weight:400;width:25px;text-align:center;">18</span>
<span class="t" style="left:1px;top:626.70px;font-size:13px;line-height:13px;color:#333;font-weight:400;width:25px;text-align:center;">19</span>
<span class="t" style="left:1px;top:646.70px;font-size:13px;line-height:13px;color:#333;font-weight:400;width:25px;text-align:center;">20</span>
<span class="t" style="left:1px;top:665.70px;font-size:13px;line-height:13px;color:#333;font-weight:400;width:25px;text-align:center;">21</span>
<div style="left:52px;top:239px;width:480px;height:19px;background:#7d98b3"></div>
<div style="left:52px;top:259px;width:480px;height:199px;background:#c6c6c6"></div>
<div style="left:52px;top:259px;width:63px;height:19px;background:#fff"></div>
<div style="left:52px;top:258px;width:480px;height:1px;background:#000"></div>
<div style="left:52px;top:278px;width:480px;height:1px;background:#000"></div>
<div style="left:52px;top:298px;width:480px;height:1px;background:#000"></div>
<div style="left:52px;top:318px;width:480px;height:1px;background:#000"></div>
<div style="left:52px;top:338px;width:480px;height:1px;background:#000"></div>
<div style="left:52px;top:358px;width:480px;height:1px;background:#000"></div>
<div style="left:52px;top:378px;width:480px;height:1px;background:#000"></div>
<div style="left:52px;top:398px;width:480px;height:1px;background:#000"></div>
<div style="left:52px;top:418px;width:480px;height:1px;background:#000"></div>
<div style="left:52px;top:438px;width:480px;height:1px;background:#000"></div>
<div style="left:52px;top:458px;width:480px;height:1px;background:#000"></div>
<div style="left:115px;top:239px;width:1px;height:219px;background:#000"></div>
<div style="left:243px;top:239px;width:1px;height:219px;background:#000"></div>
<div style="left:344px;top:239px;width:1px;height:219px;background:#000"></div>
<div style="left:448px;top:239px;width:1px;height:219px;background:#000"></div>
<div style="left:50px;top:237px;width:483px;height:2px;background:#1e6b3c"></div>
<div style="left:50px;top:237px;width:2px;height:223px;background:#1e6b3c"></div>
<div style="left:531px;top:237px;width:2px;height:219px;background:#1e6b3c"></div>
<div style="left:50px;top:458px;width:479px;height:2px;background:#1e6b3c"></div>
<div style="left:52px;top:239px;width:479px;height:1px;background:#fff"></div>
<div style="left:52px;top:239px;width:1px;height:219px;background:#fff"></div>
<div style="left:528px;top:455px;width:6px;height:6px;background:#fff"></div>
<div style="left:529px;top:456px;width:5px;height:5px;background:#1e6b3c"></div>
<span class="t" style="left:52px;top:243.00px;font-size:13px;line-height:13px;color:#000;font-weight:700;width:63px;text-align:center;">№</span>
<span class="t" style="left:116px;top:243.00px;font-size:13px;line-height:13px;color:#000;font-weight:700;width:127px;text-align:center;">ФИО</span>
<span class="t" style="left:244px;top:243.00px;font-size:13px;line-height:13px;color:#000;font-weight:700;width:100px;text-align:center;letter-spacing:-0.18px;">Категория</span>
<span class="t" style="left:345px;top:243.00px;font-size:13px;line-height:13px;color:#000;font-weight:700;width:103px;text-align:center;letter-spacing:0.36px;">Предмет</span>
<span class="t" style="left:449px;top:243.00px;font-size:13px;line-height:13px;color:#000;font-weight:700;width:82px;text-align:center;letter-spacing:-0.45px;">Зарплата</span>
<span class="t" style="left:52px;top:263.00px;font-size:13px;line-height:13px;color:#000;font-weight:400;width:63px;text-align:center;">1</span>
<span class="t" style="left:118px;top:263.00px;font-size:13px;line-height:13px;color:#000;font-weight:400;">Петрова Н.В.</span>
<span class="t" style="left:244px;top:263.00px;font-size:13px;line-height:13px;color:#000;font-weight:400;width:100px;text-align:center;">Первая</span>
<span class="t" style="left:347px;top:263.00px;font-size:13px;line-height:13px;color:#000;font-weight:400;letter-spacing:0.25px;">Физика</span>
<span class="t" style="left:449px;top:263.00px;font-size:13px;line-height:13px;color:#000;font-weight:400;width:82px;text-align:center;letter-spacing:-0.9px;">300</span>
<span class="t" style="left:52px;top:283.00px;font-size:13px;line-height:13px;color:#000;font-weight:400;width:63px;text-align:center;">2</span>
<span class="t" style="left:116px;top:283.00px;font-size:13px;line-height:13px;color:#000;font-weight:400;width:125px;text-align:right;letter-spacing:0.3px;">Иванова Д.М.</span>
<span class="t" style="left:244px;top:283.00px;font-size:13px;line-height:13px;color:#000;font-weight:400;width:100px;text-align:center;">Первая</span>
<span class="t" style="left:347px;top:283.00px;font-size:13px;line-height:13px;color:#000;font-weight:400;letter-spacing:0.35px;">Математика</span>
<span class="t" style="left:449px;top:283.00px;font-size:13px;line-height:13px;color:#000;font-weight:400;width:82px;text-align:center;letter-spacing:-0.9px;">300</span>
<span class="t" style="left:52px;top:303.00px;font-size:13px;line-height:13px;color:#000;font-weight:400;width:63px;text-align:center;">3</span>
<span class="t" style="left:116px;top:303.00px;font-size:13px;line-height:13px;color:#000;font-weight:400;width:125px;text-align:right;">Козел П.Э.</span>
<span class="t" style="left:244px;top:303.00px;font-size:13px;line-height:13px;color:#000;font-weight:400;width:100px;text-align:center;">Вторая</span>
<span class="t" style="left:347px;top:303.00px;font-size:13px;line-height:13px;color:#000;font-weight:400;letter-spacing:0.28px;">История</span>
<span class="t" style="left:449px;top:303.00px;font-size:13px;line-height:13px;color:#000;font-weight:400;width:82px;text-align:center;letter-spacing:-0.9px;">200</span>
<span class="t" style="left:52px;top:323.00px;font-size:13px;line-height:13px;color:#000;font-weight:400;width:63px;text-align:center;">4</span>
<span class="t" style="left:116px;top:323.00px;font-size:13px;line-height:13px;color:#000;font-weight:400;width:125px;text-align:right;letter-spacing:0.25px;">Мартынова Л.П.</span>
<span class="t" style="left:244px;top:323.00px;font-size:13px;line-height:13px;color:#000;font-weight:400;width:100px;text-align:center;">Первая</span>
<span class="t" style="left:347px;top:323.00px;font-size:13px;line-height:13px;color:#000;font-weight:400;letter-spacing:0.35px;">Математика</span>
<span class="t" style="left:449px;top:323.00px;font-size:13px;line-height:13px;color:#000;font-weight:400;width:82px;text-align:center;letter-spacing:-0.9px;">300</span>
<span class="t" style="left:52px;top:343.00px;font-size:13px;line-height:13px;color:#000;font-weight:400;width:63px;text-align:center;">5</span>
<span class="t" style="left:116px;top:343.00px;font-size:13px;line-height:13px;color:#000;font-weight:400;width:125px;text-align:right;letter-spacing:0.28px;">Боцмонова Т.А.</span>
<span class="t" style="left:244px;top:343.00px;font-size:13px;line-height:13px;color:#000;font-weight:400;width:100px;text-align:center;">Первая</span>
<span class="t" style="left:347px;top:343.00px;font-size:13px;line-height:13px;color:#000;font-weight:400;letter-spacing:0.25px;">Физ-ра</span>
<span class="t" style="left:449px;top:343.00px;font-size:13px;line-height:13px;color:#000;font-weight:400;width:82px;text-align:center;letter-spacing:-0.9px;">300</span>
<span class="t" style="left:52px;top:363.00px;font-size:13px;line-height:13px;color:#000;font-weight:400;width:63px;text-align:center;">6</span>
<span class="t" style="left:116px;top:363.00px;font-size:13px;line-height:13px;color:#000;font-weight:400;width:125px;text-align:right;letter-spacing:0.28px;">Пелерман В.И.</span>
<span class="t" style="left:244px;top:363.00px;font-size:13px;line-height:13px;color:#000;font-weight:400;width:100px;text-align:center;letter-spacing:-0.25px;">Высшая</span>
<span class="t" style="left:347px;top:363.00px;font-size:13px;line-height:13px;color:#000;font-weight:400;letter-spacing:0.2px;">Русский язык</span>
<span class="t" style="left:449px;top:363.00px;font-size:13px;line-height:13px;color:#000;font-weight:400;width:82px;text-align:center;letter-spacing:-0.9px;">400</span>
<span class="t" style="left:52px;top:383.00px;font-size:13px;line-height:13px;color:#000;font-weight:400;width:63px;text-align:center;">7</span>
<span class="t" style="left:118px;top:383.00px;font-size:13px;line-height:13px;color:#000;font-weight:400;letter-spacing:0.2px;">Ушаков П.М.</span>
<span class="t" style="left:244px;top:383.00px;font-size:13px;line-height:13px;color:#000;font-weight:400;width:100px;text-align:center;">Вторая</span>
<span class="t" style="left:347px;top:383.00px;font-size:13px;line-height:13px;color:#000;font-weight:400;letter-spacing:0.32px;">Биология</span>
<span class="t" style="left:449px;top:383.00px;font-size:13px;line-height:13px;color:#000;font-weight:400;width:82px;text-align:center;letter-spacing:-0.9px;">200</span>
<span class="t" style="left:52px;top:403.00px;font-size:13px;line-height:13px;color:#000;font-weight:400;width:63px;text-align:center;">8</span>
<span class="t" style="left:118px;top:403.00px;font-size:13px;line-height:13px;color:#000;font-weight:400;letter-spacing:0.45px;">Георгиев Д.М.</span>
<span class="t" style="left:244px;top:403.00px;font-size:13px;line-height:13px;color:#000;font-weight:400;width:100px;text-align:center;letter-spacing:0.15px;">Специалист</span>
<span class="t" style="left:347px;top:403.00px;font-size:13px;line-height:13px;color:#000;font-weight:400;">География</span>
<span class="t" style="left:449px;top:403.00px;font-size:13px;line-height:13px;color:#000;font-weight:400;width:82px;text-align:center;letter-spacing:-0.8px;">100</span>
<span class="t" style="left:52px;top:423.00px;font-size:13px;line-height:13px;color:#000;font-weight:400;width:63px;text-align:center;">9</span>
<span class="t" style="left:118px;top:423.00px;font-size:13px;line-height:13px;color:#000;font-weight:400;">Соколов К.С.</span>
<span class="t" style="left:244px;top:423.00px;font-size:13px;line-height:13px;color:#000;font-weight:400;width:100px;text-align:center;letter-spacing:0.15px;">Специалист</span>
<span class="t" style="left:347px;top:423.00px;font-size:13px;line-height:13px;color:#000;font-weight:400;letter-spacing:0.22px;">Химия</span>
<span class="t" style="left:449px;top:423.00px;font-size:13px;line-height:13px;color:#000;font-weight:400;width:82px;text-align:center;letter-spacing:-0.8px;">100</span>
<span class="t" style="left:52px;top:443.00px;font-size:13px;line-height:13px;color:#000;font-weight:400;width:63px;text-align:center;letter-spacing:-0.6px;">10</span>
<span class="t" style="left:118px;top:443.00px;font-size:13px;line-height:13px;color:#000;font-weight:400;letter-spacing:-0.3px;">Седов С.С.</span>
<span class="t" style="left:244px;top:443.00px;font-size:13px;line-height:13px;color:#000;font-weight:400;width:100px;text-align:center;letter-spacing:-0.25px;">Высшая</span>
<span class="t" style="left:347px;top:443.00px;font-size:13px;line-height:13px;color:#000;font-weight:400;letter-spacing:0.35px;">Математика</span>
<span class="t" style="left:449px;top:443.00px;font-size:13px;line-height:13px;color:#000;font-weight:400;width:82px;text-align:center;letter-spacing:-0.9px;">400</span>
<div style="left:614px;top:238px;width:84px;height:221px;border:1px solid #000;box-sizing:border-box;background:#fff"></div>
<div style="left:615px;top:239px;width:82px;height:19px;background:#9bc2e6"></div>
<div style="left:614px;top:258px;width:84px;height:1px;background:#000"></div>
<div style="left:614px;top:278px;width:84px;height:1px;background:#000"></div>
<div style="left:614px;top:298px;width:84px;height:1px;background:#000"></div>
<div style="left:614px;top:318px;width:84px;height:1px;background:#000"></div>
<div style="left:614px;top:338px;width:84px;height:1px;background:#000"></div>
<div style="left:614px;top:358px;width:84px;height:1px;background:#000"></div>
<div style="left:614px;top:378px;width:84px;height:1px;background:#000"></div>
<div style="left:614px;top:398px;width:84px;height:1px;background:#000"></div>
<div style="left:614px;top:418px;width:84px;height:1px;background:#000"></div>
<div style="left:614px;top:438px;width:84px;height:1px;background:#000"></div>
<div style="left:614px;top:458px;width:84px;height:1px;background:#000"></div>
<span class="t" style="left:615px;top:243.00px;font-size:13px;line-height:13px;color:#000;font-weight:700;width:82px;text-align:center;letter-spacing:0.1px;">Премия</span>
<span class="t" style="left:615px;top:263.00px;font-size:13px;line-height:13px;color:#000;font-weight:400;width:82px;text-align:center;letter-spacing:-0.8px;">100</span>
<span class="t" style="left:615px;top:283.00px;font-size:13px;line-height:13px;color:#000;font-weight:400;width:82px;text-align:center;letter-spacing:-0.8px;">100</span>
<span class="t" style="left:615px;top:303.00px;font-size:13px;line-height:13px;color:#000;font-weight:400;width:82px;text-align:center;letter-spacing:-0.8px;">100</span>
<span class="t" style="left:615px;top:323.00px;font-size:13px;line-height:13px;color:#000;font-weight:400;width:82px;text-align:center;letter-spacing:-0.8px;">100</span>
<span class="t" style="left:615px;top:343.00px;font-size:13px;line-height:13px;color:#000;font-weight:400;width:82px;text-align:center;letter-spacing:-0.8px;">100</span>
<span class="t" style="left:615px;top:363.00px;font-size:13px;line-height:13px;color:#000;font-weight:400;width:82px;text-align:center;">0</span>
<span class="t" style="left:615px;top:383.00px;font-size:13px;line-height:13px;color:#000;font-weight:400;width:82px;text-align:center;letter-spacing:-0.8px;">100</span>
<span class="t" style="left:615px;top:403.00px;font-size:13px;line-height:13px;color:#000;font-weight:400;width:82px;text-align:center;">0</span>
<span class="t" style="left:615px;top:423.00px;font-size:13px;line-height:13px;color:#000;font-weight:400;width:82px;text-align:center;">0</span>
<span class="t" style="left:615px;top:443.00px;font-size:13px;line-height:13px;color:#000;font-weight:400;width:82px;text-align:center;">0</span>
<span class="t" style="left:698px;top:263.00px;font-size:13px;line-height:13px;color:#000;font-weight:400;width:61px;text-align:right;">1</span>
<div style="left:950px;top:199px;width:21px;height:483px;background:#e6e6e6"></div>
<div style="left:953px;top:201px;width:15px;height:15px;background:#fff;border:1px solid #c6c6c6;box-sizing:border-box"></div>
<svg style="left:956px;top:206px;" width="9" height="5" viewBox="0 0 9 5"><path d="M0 5h9L4.5 0z" fill="#666"/></svg>
<div style="left:953px;top:216px;width:15px;height:451px;background:#d9d9d9"></div>
<div style="left:953px;top:216px;width:15px;height:428px;background:#fff;border:1px solid #c6c6c6;box-sizing:border-box"></div>
<div style="left:953px;top:667px;width:15px;height:15px;background:#fff;border:1px solid #c6c6c6;box-sizing:border-box"></div>
<svg style="left:956px;top:672px;" width="9" height="5" viewBox="0 0 9 5"><path d="M0 0h9L4.5 5z" fill="#666"/></svg>
<div style="left:140px;top:495px;width:814px;height:164px;background:#fff;border:1px solid #1e6b3c;box-sizing:border-box"></div>
<svg style="left:537px;top:486px;" width="21" height="11" viewBox="0 0 21 11"><path d="M1.5 9.5L10.5 0.5 19.5 9.5" fill="#fff" stroke="#1e6b3c" stroke-width="1"/><rect x="2.5" y="9" width="16" height="2" fill="#fff"/></svg>
<div style="left:535px;top:462px;width:24px;height:24px;background:#aaa;border:1px solid #1e6b3c;box-sizing:border-box"></div>
<svg style="left:538px;top:465px;" width="18" height="18" viewBox="0 0 18 18"><rect x="4" y="5" width="12" height="11" fill="#fff" stroke="#666" stroke-width="1.5"/><rect x="8" y="12" width="6" height="1.5" fill="#2a8a4a"/><path d="M5 0h4L6 5h3L3 11l2-5H2z" fill="#e8c27a"/><rect x="9" y="7" width="3" height="2" fill="#e2572f"/></svg>
<div style="left:117px;top:473px;width:845px;height:197px;border:3px solid #ff3a3d;box-sizing:border-box;filter:drop-shadow(1px 3px 2px rgba(0,0,0,0.55))"></div>
<div style="left:152px;top:510px;width:103px;height:16px;border:1px dotted #333;box-sizing:border-box"></div>
<span class="t" style="left:153.5px;top:513.34px;font-size:12px;line-height:12px;color:#217346;font-weight:700;letter-spacing:-0.2px;">Форматирование</span>
<div style="left:265px;top:508px;width:1px;height:20px;background:#dadada"></div>
<div style="left:359px;top:508px;width:1px;height:20px;background:#dadada"></div>
<div style="left:418px;top:508px;width:1px;height:20px;background:#dadada"></div>
<div style="left:495px;top:508px;width:1px;height:20px;background:#dadada"></div>
<span class="t" style="left:280px;top:513.34px;font-size:12px;line-height:12px;color:#444;font-weight:400;letter-spacing:0.18px;">Диаграммы</span>
<span class="t" style="left:373px;top:513.34px;font-size:12px;line-height:12px;color:#444;font-weight:400;letter-spacing:0.25px;">Итоги</span>
<span class="t" style="left:433px;top:513.34px;font-size:12px;line-height:12px;color:#444;font-weight:400;">Таблицы</span>
<span class="t" style="left:510px;top:513.34px;font-size:12px;line-height:12px;color:#444;font-weight:400;">Спарклайны</span>
<svg style="left:202px;top:552px;" width="28" height="27" viewBox="0 0 28 27"><rect x="7" y="1.0" width="9.5" height="4.2" fill="#4a7fc0"/><rect x="17" y="2.6" width="3" height="1" fill="#555"/><rect x="7" y="6.1" width="3.5" height="4.2" fill="#4a7fc0"/><rect x="17" y="7.7" width="3" height="1" fill="#555"/><rect x="7" y="11.2" width="6.5" height="4.2" fill="#4a7fc0"/><rect x="17" y="12.8" width="3" height="1" fill="#555"/><rect x="7" y="16.3" width="8.5" height="4.2" fill="#4a7fc0"/><rect x="17" y="17.9" width="3" height="1" fill="#555"/><rect x="7" y="21.4" width="6.5" height="4.2" fill="#4a7fc0"/><rect x="17" y="23.0" width="3" height="1" fill="#555"/><rect x="0.5" y="0.5" width="27" height="26" fill="none" stroke="#777" stroke-width="1"/><path d="M6.5 0.5V26.5" stroke="#999" stroke-width="1"/><path d="M21.5 0.5V26.5" stroke="#999" stroke-width="1"/><path d="M0.5 5.5H27.5" stroke="#999" stroke-width="1"/><path d="M0.5 10.5H27.5" stroke="#999" stroke-width="1"/><path d="M0.5 15.5H27.5" stroke="#999" stroke-width="1"/><path d="M0.5 20.5H27.5" stroke="#999" stroke-width="1"/></svg>
<span class="t" style="left:180.5px;top:589.04px;font-size:12px;line-height:12px;color:#444;font-weight:400;">Гистограмма</span>
<svg style="left:329px;top:552px;" width="28" height="27" viewBox="0 0 28 27"><rect x="7" y="1.0" width="14" height="4.2" fill="#4a7fc0"/><rect x="13" y="2.6" width="6" height="1.2" fill="#444"/><rect x="7" y="6.1" width="14" height="4.2" fill="#7fb58f"/><rect x="13" y="7.7" width="6" height="1.2" fill="#444"/><rect x="7" y="11.2" width="14" height="4.2" fill="#f3cb7a"/><rect x="13" y="12.8" width="6" height="1.2" fill="#444"/><rect x="7" y="16.3" width="14" height="4.2" fill="#eb9a45"/><rect x="13" y="17.9" width="6" height="1.2" fill="#444"/><rect x="7" y="21.4" width="14" height="4.2" fill="#dd5a38"/><rect x="13" y="23.0" width="6" height="1.2" fill="#444"/><rect x="0.5" y="0.5" width="27" height="26" fill="none" stroke="#777" stroke-width="1"/><path d="M6.5 0.5V26.5" stroke="#999" stroke-width="1"/><path d="M21.5 0.5V26.5" stroke="#999" stroke-width="1"/><path d="M0.5 5.5H27.5" stroke="#999" stroke-width="1"/><path d="M0.5 10.5H27.5" stroke="#999" stroke-width="1"/><path d="M0.5 15.5H27.5" stroke="#999" stroke-width="1"/><path d="M0.5 20.5H27.5" stroke="#999" stroke-width="1"/></svg>
<span class="t" style="left:299px;top:589.04px;font-size:12px;line-height:12px;color:#444;font-weight:400;letter-spacing:-0.22px;">Цветовая шкала</span>
<svg style="left:456px;top:552px;" width="28" height="27" viewBox="0 0 28 27"><rect x="0.5" y="0.5" width="27" height="26" fill="none" stroke="#777" stroke-width="1"/><path d="M6.5 0.5V26.5" stroke="#999" stroke-width="1"/><path d="M21.5 0.5V26.5" stroke="#999" stroke-width="1"/><path d="M0.5 5.5H27.5" stroke="#999" stroke-width="1"/><path d="M0.5 10.5H27.5" stroke="#999" stroke-width="1"/><path d="M0.5 15.5H27.5" stroke="#999" stroke-width="1"/><path d="M0.5 20.5H27.5" stroke="#999" stroke-width="1"/><circle cx="9.5" cy="3.0" r="1.4" fill="#4f9a7a"/><rect x="13" y="2.5" width="6" height="1" fill="#666"/><circle cx="9.5" cy="8.1" r="1.4" fill="#e2572f"/><rect x="13" y="7.6" width="6" height="1" fill="#666"/><circle cx="9.5" cy="13.2" r="1.4" fill="#4f9a7a"/><rect x="13" y="12.7" width="6" height="1" fill="#666"/><circle cx="9.5" cy="18.3" r="1.4" fill="#e2572f"/><rect x="13" y="17.8" width="6" height="1" fill="#666"/><circle cx="9.5" cy="23.4" r="1.4" fill="#4f9a7a"/><rect x="13" y="22.9" width="6" height="1" fill="#666"/></svg>
<span class="t" style="left:430px;top:589.04px;font-size:12px;line-height:12px;color:#444;font-weight:400;">Набор значков</span>
<svg style="left:583px;top:553px;" width="33" height="33" viewBox="0 0 33 33"><path d="M0.5 0.5H27.5V14.5M0.5 0.5V24.5H14.5" fill="none" stroke="#777" stroke-width="1"/><path d="M7.5 0.5V24.5M20.5 0.5V14.5M0.5 6.5H27.5M0.5 12.5H27.5M0.5 18.5H14.5" stroke="#aaa" stroke-width="1"/><rect x="8" y="7" width="12.5" height="5.5" fill="#f1c96e"/><rect x="14.5" y="16.5" width="15" height="12" fill="#fff" stroke="#666" stroke-width="1"/><path d="M18.5 19.5l6 3-6 3" fill="none" stroke="#444" stroke-width="1.3"/></svg>
<span class="t" style="left:576px;top:589.04px;font-size:12px;line-height:12px;color:#444;font-weight:400;">Больше</span>
<svg style="left:710px;top:553px;" width="33" height="33" viewBox="0 0 33 33"><path d="M0.5 0.5H27.5V14.5M0.5 0.5V24.5H14.5" fill="none" stroke="#777" stroke-width="1"/><path d="M7.5 0.5V24.5M20.5 0.5V14.5M0.5 6.5H27.5M0.5 12.5H27.5M0.5 18.5H14.5" stroke="#aaa" stroke-width="1"/><rect x="8" y="7" width="12.5" height="5.5" fill="#f1c96e"/><rect x="14.5" y="16.5" width="15" height="12" fill="#fff" stroke="#666" stroke-width="1"/><text x="16" y="26.5" font-family="Liberation Serif" font-size="11" fill="#333">ab</text></svg>
<span class="t" style="left:682px;top:589.04px;font-size:12px;line-height:12px;color:#444;font-weight:400;letter-spacing:-0.14px;">Текст содержит</span>
<svg style="left:837px;top:552px;" width="33" height="33" viewBox="0 0 33 33"><path d="M0.5 0.5H27.5V14.5M0.5 0.5V24.5H14.5" fill="none" stroke="#777" stroke-width="1"/><path d="M7.5 0.5V24.5M20.5 0.5V14.5M0.5 6.5H27.5M0.5 12.5H27.5M0.5 18.5H14.5" stroke="#aaa" stroke-width="1"/><rect x="8" y="7" width="12.5" height="5.5" fill="#f1c96e"/><g transform="translate(22.3 21.8) rotate(-45)"><rect x="-9" y="-4.3" width="18" height="8.6" rx="1.5" fill="#e4849a" stroke="#fff" stroke-width="1"/><rect x="-5.5" y="-4" width="1" height="8" fill="#fff"/></g></svg>
<span class="t" style="left:802.5px;top:589.04px;font-size:12px;line-height:12px;color:#444;font-weight:400;letter-spacing:-0.17px;">Очистить формат</span>
<span class="t" style="left:152px;top:637.49px;font-size:11px;line-height:11px;color:#666;font-weight:400;letter-spacing:0.3px">Условное форматирование предполагает выделение важных данных с помощью правил.</span>
<div style="left:1px;top:682px;width:970px;height:27px;background:#e6e6e6"></div>
<div style="left:101px;top:682px;width:61px;height:24px;background:#fff"></div>
<div style="left:101px;top:704px;width:61px;height:2px;background:#217346"></div>
<span class="t" style="left:113px;top:688.84px;font-size:12px;line-height:12px;color:#217346;font-weight:700;">Лист1</span>
<span class="t" style="left:174.5px;top:688.84px;font-size:12px;line-height:12px;color:#444;font-weight:400;">Лист2</span>
<div style="left:220px;top:690px;width:1px;height:15px;background:#999"></div>
<svg style="left:254px;top:687px;" width="16" height="16" viewBox="0 0 16 16"><circle cx="8" cy="8" r="7" fill="none" stroke="#777" stroke-width="1.2"/><path d="M8 4.5v7M4.5 8h7" stroke="#666" stroke-width="1.6"/></svg>
<div style="left:583px;top:690px;width:2px;height:2px;background:#aaa"></div>
<div style="left:583px;top:694px;width:2px;height:2px;background:#aaa"></div>
<div style="left:583px;top:698px;width:2px;height:2px;background:#aaa"></div>
<div style="left:600px;top:688px;width:350px;height:15px;background:#d6d6d6"></div>
<div style="left:600px;top:688px;width:15px;height:15px;background:#fff;border:1px solid #c6c6c6;box-sizing:border-box"></div>
<svg style="left:605px;top:691px;" width="5" height="9" viewBox="0 0 5 9"><path d="M5 0v9L0 4.5z" fill="#666"/></svg>
<div style="left:614px;top:688px;width:291px;height:15px;background:#fff;border:1px solid #c6c6c6;box-sizing:border-box"></div>
<div style="left:935px;top:688px;width:15px;height:15px;background:#fff;border:1px solid #c6c6c6;box-sizing:border-box"></div>
<svg style="left:940px;top:691px;" width="5" height="9" viewBox="0 0 5 9"><path d="M0 0v9L5 4.5z" fill="#666"/></svg>
<div style="left:1px;top:709px;width:970px;height:1px;background:#d2d2d2"></div>
<div style="left:1px;top:710px;width:970px;height:21px;background:#f1f1f1"></div>
<span class="t" style="left:8px;top:714.34px;font-size:12px;line-height:12px;color:#444;font-weight:400;letter-spacing:-0.25px;">Готово</span>
<svg style="left:65px;top:712px;" width="15" height="15" viewBox="0 0 15 15"><circle cx="3.2" cy="3.5" r="2.9" fill="#777"/><rect x="7" y="2" width="7" height="2.2" fill="#777"/><path d="M1.5 7v6.5h12.5V4" fill="none" stroke="#777" stroke-width="1"/><path d="M3 8.5h2M6.5 8.5h2M10 8.5h2M3 10.5h2M6.5 10.5h2M10 10.5h2M3 12.5h2M6.5 12.5h2M10 12.5h2" stroke="#777" stroke-width="1"/></svg>
<span class="t" style="left:389.5px;top:715.19px;font-size:11px;line-height:11px;color:#444;font-weight:400;">Среднее: 132,75</span>
<span class="t" style="left:489.5px;top:715.19px;font-size:11px;line-height:11px;color:#444;font-weight:400;letter-spacing:0.15px;">Количество: 55</span>
<span class="t" style="left:585.5px;top:715.19px;font-size:11px;line-height:11px;color:#444;font-weight:400;letter-spacing:-0.15px;">Сумма: 2655</span>
<div style="left:668px;top:710px;width:38px;height:21px;background:#c6c6c6"></div>
<svg style="left:680px;top:713px;" width="13" height="13" viewBox="0 0 13 13"><path d="M0.5 0.5h12v12h-12zM0.5 4.5h12M0.5 8.5h12M4.5 0.5v12M8.5 0.5v12" fill="none" stroke="#666" stroke-width="1"/></svg>
<svg style="left:718px;top:713px;" width="15" height="13" viewBox="0 0 15 13"><rect x="0.5" y="0.5" width="13.5" height="12" fill="none" stroke="#666" stroke-width="1"/><rect x="3.5" y="2.5" width="7.5" height="8" fill="none" stroke="#666" stroke-width="1"/><path d="M5 5h4.5M5 7h4.5M5 9h4.5" stroke="#666" stroke-width="0.8"/></svg>
<svg style="left:756px;top:713px;" width="14" height="13" viewBox="0 0 14 13"><path d="M0.5 0.5h13v12h-13zM0.5 8.5h13M5.5 0.5v5M9.5 0.5v5" fill="none" stroke="#666" stroke-width="1"/></svg>
<div style="left:787px;top:719px;width:6px;height:2px;background:#555"></div>
<div style="left:796px;top:719px;width:101px;height:1px;background:#999"></div>
<div style="left:845px;top:714px;width:4px;height:11px;background:#666"></div>
<svg style="left:901px;top:714px;" width="9" height="10" viewBox="0 0 9 10"><path d="M4.5 0.5v9M0 5h9" stroke="#555" stroke-width="2"/></svg>
<span class="t" style="left:925px;top:714.77px;font-size:11.5px;line-height:11.5px;color:#555;font-weight:400;letter-spacing:-0.6px;">100%</span>
<svg style="left:20px;top:646px;" width="78" height="66" viewBox="0 0 78 66"><rect x="2.5" y="3.5" width="72" height="57" rx="6" fill="rgba(255,255,255,0.45)" stroke="rgba(160,160,160,0.75)" stroke-width="1"/><rect x="6.5" y="6.5" width="64" height="50" rx="6" fill="none" stroke="rgba(175,175,175,0.8)" stroke-width="3"/><path d="M25.5 64.5v-2.5a2 2 0 0 1 2-2h18a2 2 0 0 1 2 2v2.5" fill="none" stroke="rgba(175,175,175,0.7)" stroke-width="1.2"/><path d="M37 36L14.5 13.5" stroke="rgba(175,175,175,0.85)" stroke-width="3.2" stroke-linecap="round"/><path d="M12.2 11.5l16 5.5-10.5 10.5z" fill="rgba(175,175,175,0.85)"/><path d="M23.5 46l-3 4 3 4M42 46l3 4-3 4" fill="none" stroke="rgba(215,215,215,.7)" stroke-width="1.5"/></svg>
<svg style="left:95px;top:655px;" width="225" height="45" viewBox="0 0 225 45"><text x="7" y="34" font-family="Liberation Sans" font-weight="700" font-size="33" textLength="58" lengthAdjust="spacingAndGlyphs" fill="rgba(250,190,200,0.6)" stroke="rgba(235,150,165,0.75)" stroke-width="2.6" paint-order="stroke">OS</text><text x="79" y="34" font-family="Liberation Sans" font-weight="700" font-size="33" textLength="134" lengthAdjust="spacingAndGlyphs" fill="rgba(255,255,255,0.55)" stroke="rgba(165,165,165,0.75)" stroke-width="2.6" paint-order="stroke">Helper</text></svg>
<div style="left:0px;top:36px;width:1px;height:696px;background:#217346"></div>
<div style="left:971px;top:36px;width:1px;height:696px;background:#217346"></div>
<div style="left:0px;top:731px;width:972px;height:1px;background:#217346"></div>
</body></html>
